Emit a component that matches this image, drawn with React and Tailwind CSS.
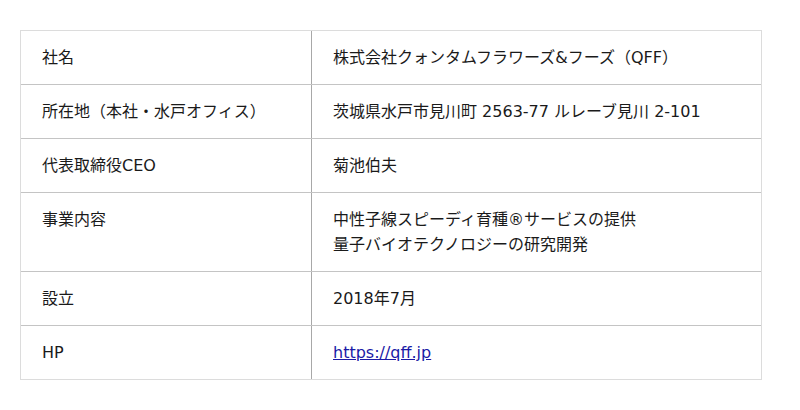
export default function App() {
  const rows = [
    ["社名", ["株式会社クォンタムフラワーズ&フーズ（QFF）"]],
    ["所在地（本社・水戸オフィス）", ["茨城県水戸市見川町 2563-77 ルレーブ見川 2-101"]],
    ["代表取締役CEO", ["菊池伯夫"]],
    ["事業内容", ["中性子線スピーディ育種®サービスの提供", "量子バイオテクノロジーの研究開発"]],
    ["設立", ["2018年7月"]],
  ];
  return (
    <div
      className="w-[800px] h-[410px] bg-white pt-[30px] pl-[20px]"
      style={{ fontFamily: '"DejaVu Sans", "Noto Sans CJK JP", sans-serif' }}
    >
      <div className="w-[742px] border border-[#dcdcdc] text-[16px] leading-[25px] text-[#1a1a1a]">
        {rows.map(([k, v], i) => (
          <div key={i} className="flex border-b border-[#c4c4c4]">
            <div className="w-[291px] shrink-0 border-r border-[#a8a8a8] pl-[21px] py-[14px]">{k}</div>
            <div className="flex-1 pl-[21px] py-[14px]">
              {v.map((t, j) => (
                <div key={j}>{t}</div>
              ))}
            </div>
          </div>
        ))}
        <div className="flex">
          <div className="w-[291px] shrink-0 border-r border-[#a8a8a8] pl-[21px] py-[14px]">HP</div>
          <div className="flex-1 pl-[21px] py-[14px]">
            <a href="#" className="text-[#1a1aa6] underline">https://qff.jp</a>
          </div>
        </div>
      </div>
    </div>
  );
}
